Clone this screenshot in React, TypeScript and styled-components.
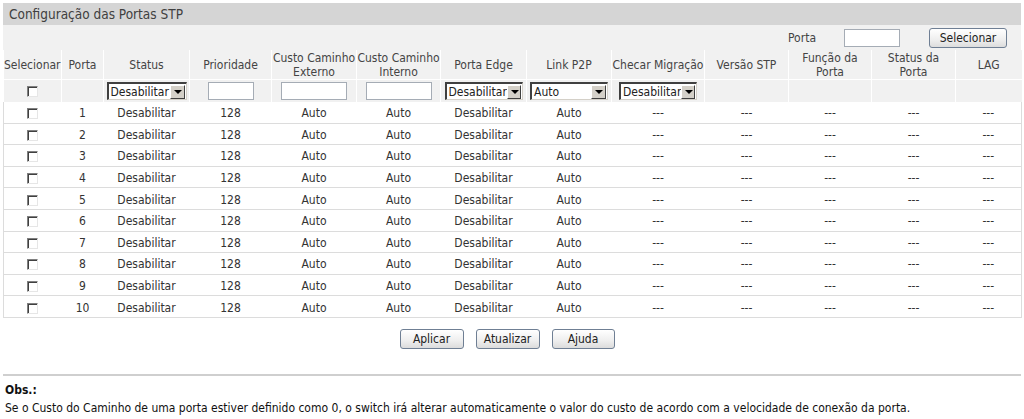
import React from "react";
import styled, { createGlobalStyle } from "styled-components";

const GlobalStyle = createGlobalStyle`
  html, body {
    margin: 0;
    padding: 0;
    background: #ffffff;
    font-family: Tahoma, "DejaVu Sans Condensed", "Liberation Sans", sans-serif;
    font-size: 12px;
    color: #333333;
  }
`;

const COLS = [58, 42, 86, 82, 85, 84, 86, 85, 93, 84, 83, 84, 66];

// \n marks where the two-line headings break
const HEADERS = [
  "Selecionar",
  "Porta",
  "Status",
  "Prioridade",
  "Custo Caminho\nExterno",
  "Custo Caminho\nInterno",
  "Porta Edge",
  "Link P2P",
  "Checar Migração",
  "Versão STP",
  "Função da\nPorta",
  "Status da\nPorta",
  "LAG",
];

const ports = Array.from({ length: 10 }, (_, i) => i + 1);

const App: React.FC = () => {
  return (
    <Page>
      <GlobalStyle />
      <Title>Configuração das Portas STP</Title>
      <SelectBar>
        <span>Porta</span>
        <TextBox $w={56} />
        <Button $w={78}>Selecionar</Button>
      </SelectBar>
      <Grid>
        <colgroup>
          {COLS.map((w, i) => (
            <col key={i} style={{ width: w }} />
          ))}
        </colgroup>
        <thead>
          <tr>
            {HEADERS.map((h) => (
              <HeadCell key={h}>{h}</HeadCell>
            ))}
          </tr>
          <tr>
            <FilterCell>
              <Check />
            </FilterCell>
            <FilterCell />
            <FilterCell>
              <Select $w={80}>
                <span>Desabilitar</span>
                <Arrow />
              </Select>
            </FilterCell>
            <FilterCell>
              <TextBox $w={46} />
            </FilterCell>
            <FilterCell>
              <TextBox $w={66} />
            </FilterCell>
            <FilterCell>
              <TextBox $w={66} />
            </FilterCell>
            <FilterCell>
              <Select $w={78}>
                <span>Desabilitar</span>
                <Arrow />
              </Select>
            </FilterCell>
            <FilterCell>
              <Select $w={78}>
                <span>Auto</span>
                <Arrow />
              </Select>
            </FilterCell>
            <FilterCell>
              <Select $w={78}>
                <span>Desabilitar</span>
                <Arrow />
              </Select>
            </FilterCell>
            <FilterCell />
            <FilterCell />
            <FilterCell />
            <FilterCell />
          </tr>
        </thead>
        <tbody>
          {ports.map((p) => (
            <tr key={p}>
              <Cell>
                <Check />
              </Cell>
              <Cell>{p}</Cell>
              <Cell>Desabilitar</Cell>
              <Cell>128</Cell>
              <Cell>Auto</Cell>
              <Cell>Auto</Cell>
              <Cell>Desabilitar</Cell>
              <Cell>Auto</Cell>
              <Cell>---</Cell>
              <Cell>---</Cell>
              <Cell>---</Cell>
              <Cell>---</Cell>
              <Cell>---</Cell>
            </tr>
          ))}
        </tbody>
      </Grid>
      <Actions>
        <Button $w={64}>Aplicar</Button>
        <Button $w={64}>Atualizar</Button>
        <Button $w={63}>Ajuda</Button>
      </Actions>
      <Note>
        <NoteTitle>Obs.:</NoteTitle>
        <div>
          Se o Custo do Caminho de uma porta estiver definido como 0, o switch
          irá alterar automaticamente o valor do custo de acordo com a
          velocidade de conexão da porta.
        </div>
      </Note>
    </Page>
  );
};

const Page = styled.div`
  padding: 3px 3px 0 3px;
  width: 1018px;
`;

const Title = styled.div`
  height: 22px;
  line-height: 22px;
  background: #d5d5d5;
  padding-left: 6px;
  font-size: 13.5px;
  color: #404040;
`;

const SelectBar = styled.div`
  display: flex;
  align-items: center;
  justify-content: flex-end;
  height: 25px;
  background: #f1f1f1;
  padding-right: 14px;
  color: #444;

  span {
    margin-right: 28px;
  }
  input {
    margin-right: 29px;
  }
`;

const Grid = styled.table`
  width: 1018px;
  border-collapse: collapse;
  table-layout: fixed;
`;

const HeadCell = styled.th`
  font-weight: normal;
  background: #f1f1f1;
  color: #444;
  height: 29px;
  padding: 0;
  line-height: 14px;
  text-align: center;
  white-space: pre-line;
  border-left: 1px solid #ffffff;
  border-bottom: 1px solid #ffffff;
  &:first-child {
    border-left: none;
  }
`;

const FilterCell = styled.th`
  background: #f1f1f1;
  height: 22px;
  padding: 0;
  text-align: center;
  border-left: 1px solid #ffffff;
  &:first-child {
    border-left: none;
  }
`;

const Cell = styled.td`
  height: 18.6px;
  padding: 2px 0 0;
  text-align: center;
  color: #333;
  border-bottom: 1px solid #dcdcdc;
  &:first-child {
    border-left: 1px solid #dcdcdc;
  }
  &:last-child {
    border-right: 1px solid #dcdcdc;
  }
`;

const Check = styled.span`
  display: inline-block;
  box-sizing: border-box;
  width: 11px;
  height: 11px;
  vertical-align: middle;
  background: #fff;
  border-top: 1px solid #808080;
  border-left: 1px solid #808080;
  border-right: 1px solid #e6e6e6;
  border-bottom: 1px solid #e6e6e6;
  box-shadow: inset 1px 1px 0 #404040;
`;

const TextBox = styled.input.attrs({ type: "text" })<{ $w: number }>`
  box-sizing: border-box;
  width: ${(p) => p.$w}px;
  height: 18px;
  border: 1px solid #a5acb5;
  background: #fff;
  padding: 0;
  vertical-align: middle;
`;

const Select = styled.div<{ $w: number }>`
  box-sizing: border-box;
  display: inline-flex;
  align-items: center;
  justify-content: space-between;
  width: ${(p) => p.$w}px;
  height: 18px;
  vertical-align: middle;
  background: #fff;
  border-top: 2px solid #404040;
  border-left: 2px solid #404040;
  border-right: 1px solid #d4d0c8;
  border-bottom: 1px solid #d4d0c8;
  padding-left: 2px;
  font-weight: normal;
  color: #222;
  text-align: left;
`;

const Arrow = styled.span`
  box-sizing: border-box;
  width: 15px;
  height: 14px;
  margin-right: 1px;
  background: #d4d0c8;
  border-top: 1px solid #fff;
  border-left: 1px solid #fff;
  border-right: 1px solid #404040;
  border-bottom: 1px solid #404040;
  position: relative;
  &::after {
    content: "";
    position: absolute;
    left: 3px;
    top: 4px;
    border-left: 4px solid transparent;
    border-right: 4px solid transparent;
    border-top: 4px solid #000;
  }
`;

const Button = styled.button<{ $w: number }>`
  box-sizing: border-box;
  width: ${(p) => p.$w}px;
  height: 20px;
  padding: 0;
  font-family: inherit;
  font-size: 12px;
  color: #222;
  border: 1px solid #6f7f94;
  border-radius: 3px;
  background: linear-gradient(#ffffff, #eeeeee 60%, #dcdcdc);
`;

const Actions = styled.div`
  display: flex;
  justify-content: center;
  gap: 12px;
  padding-top: 11px;
  padding-right: 10px;
`;

const Note = styled.div`
  margin-top: 25px;
  border-top: 2px solid #cfcfcf;
  padding: 5px 2px 0;
  font-size: 12px;
  color: #111;
  line-height: 18px;
`;

const NoteTitle = styled.div`
  font-weight: bold;
`;

export default App;
